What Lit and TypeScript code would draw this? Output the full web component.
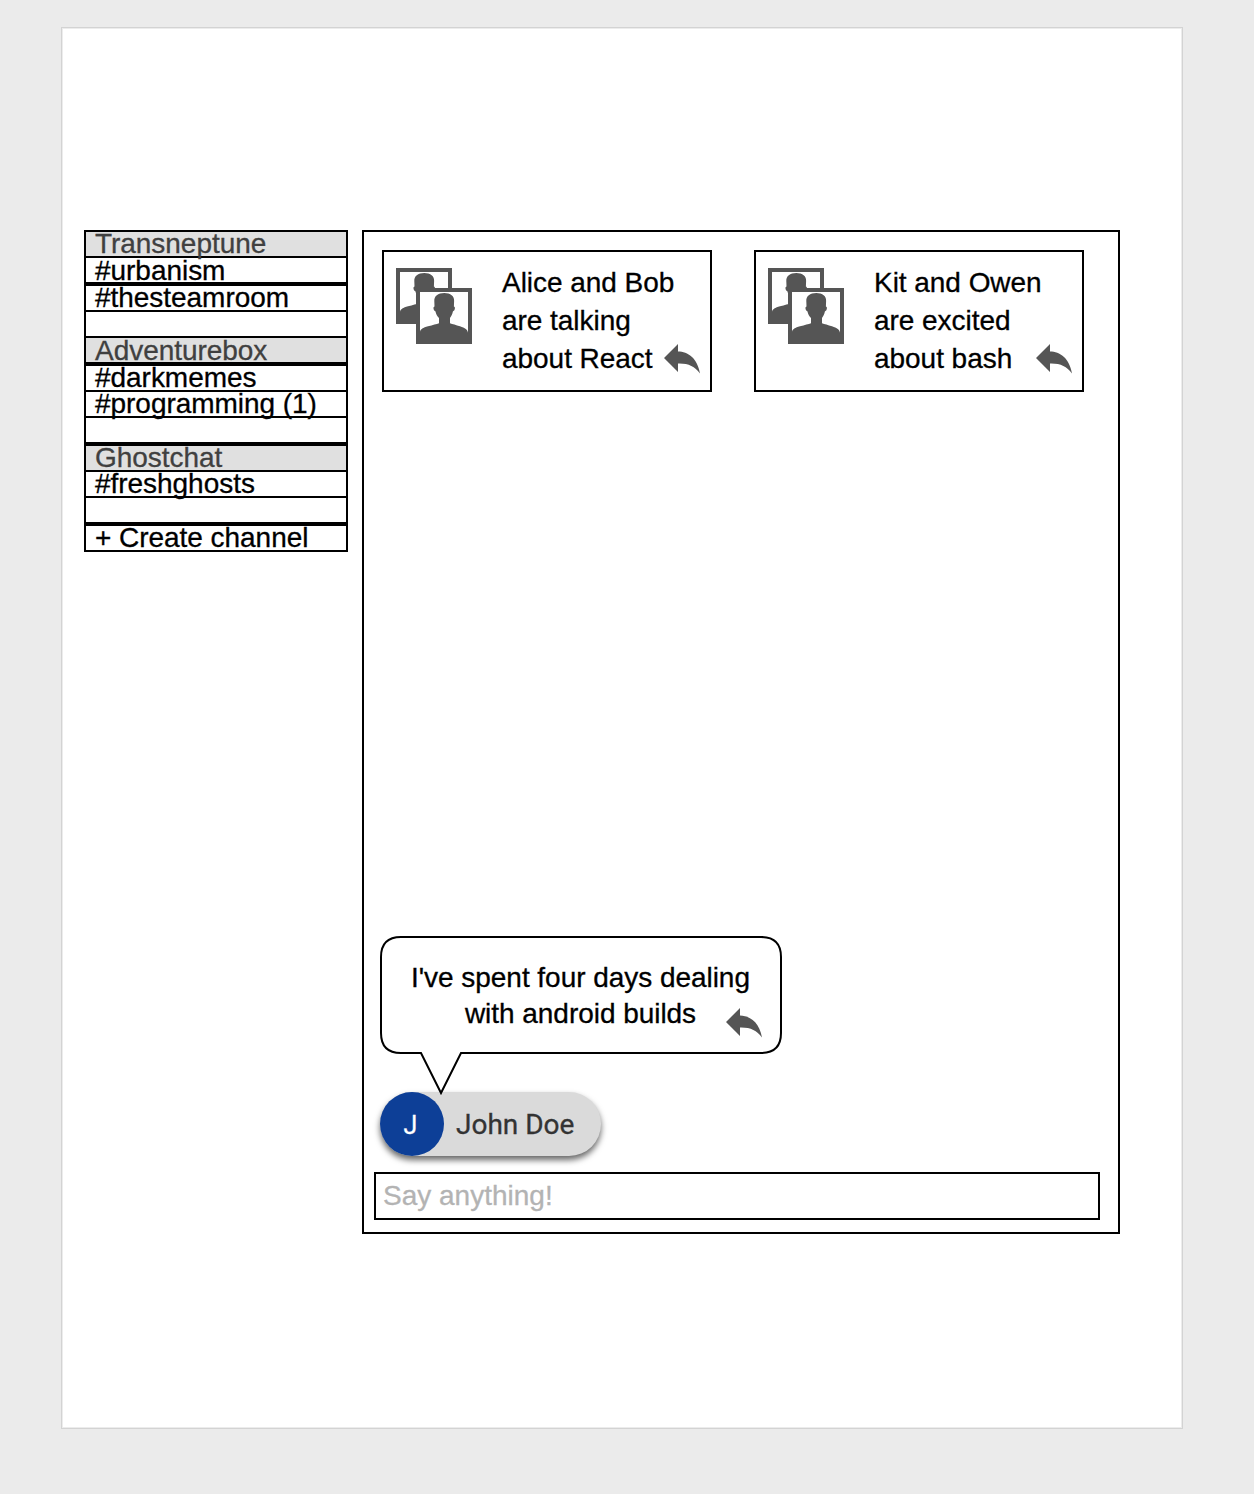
import { LitElement, html, css, svg } from "lit";
import { customElement, property } from "lit/decorators.js";
import { classMap } from "lit/directives/class-map.js";

const portrait = svg`
  <rect width="56" height="56" fill="#555"/>
  <path fill="#fff" d="M4 4H52V44.800C51.700 41.800 49 40 44 38.300C40 37 36.500 36 34 35.200V30C35 28.500 36.400 26.500 36.900 23.500C37.200 23 37.600 23.200 38.200 22.600C39.100 21 39.400 18.600 37.900 18.500L38.100 13C38.500 8 34.500 4.900 28.300 4.900C22 4.900 18 8 18.300 13L18.500 18.500C17 18.600 17.300 21 18.200 22.600C18.800 23.200 19.200 23 19.500 23.500C20 26.500 21.400 28.500 23 30V35.200C20.500 36 17 37 12 38.300C7 39.700 4.500 41.300 4 43.800Z"/>`;

@customElement("people-icon")
export class PeopleIcon extends LitElement {
  static styles = css`
    :host { display: block; width: 76px; height: 76px; }
    svg { display: block; }
  `;
  render() {
    return html`<svg width="76" height="76" viewBox="0 0 76 76">
      <g>${portrait}</g>
      <g transform="translate(20 20)">${portrait}</g>
    </svg>`;
  }
}

@customElement("reply-icon")
export class ReplyIcon extends LitElement {
  static styles = css`
    :host { display: block; width: 36px; height: 30px; }
    svg { display: block; }
  `;
  render() {
    return html`<svg width="36" height="30" viewBox="0 0 36 30">
      <path fill="#555" d="M0 14L14 0V7.600C24 7.800 33.300 14 36 29.500C30.500 22.500 24.500 19.300 14 19.600V28Z"/>
    </svg>`;
  }
}

@customElement("topic-card")
export class TopicCard extends LitElement {
  @property({ attribute: false }) lines: string[] = [];
  static styles = css`
    :host {
      box-sizing: border-box;
      display: flex;
      align-items: flex-start;
      width: 330px;
      height: 142px;
      padding: 16px 10px 0 12px;
      border: 2px solid #000;
      background: #fff;
    }
    .text { flex: 1; margin: -4px 0 0 30px; white-space: nowrap; }
    .line { height: 38px; line-height: 38px; }
    .reply { align-self: flex-end; margin: 0 0 16px -60px; }
  `;
  render() {
    return html`
      <people-icon></people-icon>
      <div class="text">${this.lines.map((l) => html`<div class="line">${l}</div>`)}</div>
      <reply-icon class="reply"></reply-icon>
    `;
  }
}

interface Row {
  text: string;
  header?: boolean;
  apart?: boolean;
  low?: boolean;
}

@customElement("channel-list")
export class ChannelList extends LitElement {
  @property({ attribute: false }) rows: Row[] = [];
  static styles = css`
    :host { display: block; width: 264px; }
    .row {
      box-sizing: border-box;
      height: 28px;
      margin-top: -2px;
      padding-left: 9px;
      border: 2px solid #000;
      line-height: 23px;
      white-space: nowrap;
    }
    .row:first-child, .apart { margin-top: 0; }
    .header { background: #e0e0e0; color: #404040; }
    .low { line-height: 25px; }
  `;
  render() {
    return this.rows.map(
      (r) => html`<div class=${classMap({ row: true, header: !!r.header, apart: !!r.apart, low: !!r.low })}>${r.text}</div>`
    );
  }
}

@customElement("app-root")
export class AppRoot extends LitElement {
  private rows: Row[] = [
    { text: "Transneptune", header: true },
    { text: "#urbanism", low: true },
    { text: "#thesteamroom", apart: true },
    { text: "" },
    { text: "Adventurebox", header: true, low: true },
    { text: "#darkmemes", apart: true },
    { text: "#programming (1)" },
    { text: "" },
    { text: "Ghostchat", header: true, apart: true },
    { text: "#freshghosts" },
    { text: "" },
    { text: "+ Create channel", apart: true },
  ];

  private topics = [
    ["Alice and Bob", "are talking", "about React"],
    ["Kit and Owen", "are excited", "about bash"],
  ];

  static styles = css`
    :host {
      box-sizing: border-box;
      display: block;
      height: 1494px;
      padding: 27px 0 0 61px;
      background: #ebebeb;
      font: 28px "Liberation Sans", Arial, sans-serif;
      letter-spacing: -0.04px;
      -webkit-text-stroke: 0.3px currentColor;
      color: #000;
    }
    .page {
      box-sizing: border-box;
      display: flex;
      align-items: flex-start;
      gap: 14px;
      width: 1122px;
      height: 1402px;
      padding: 202px 0 0 22px;
      border: 1px solid #d3d3d3;
      box-shadow: inset 0 0 0 1px #ececec;
      background-color: #fff;
    }
    .room {
      box-sizing: border-box;
      display: flex;
      flex-direction: column;
      width: 758px;
      height: 1004px;
      padding: 18px 18px 12px 10px;
      border: 2px solid #000;
    }
    .topics { display: flex; gap: 42px; margin-left: 8px; }
    .message { margin: auto 0 16px 6px; }
    .bubble {
      position: relative;
      z-index: 1;
      width: 402px;
      height: 159px;
      margin-bottom: -3px;
    }
    .outline { position: absolute; left: 0; top: 0; }
    .words {
      position: relative;
      padding: 24px 1px 0 0;
      line-height: 36px;
      text-align: center;
      white-space: nowrap;
    }
    .reply { position: absolute; left: 346px; top: 72px; }
    .chip {
      display: flex;
      align-items: center;
      width: 221px;
      height: 64px;
      border-radius: 32px;
      background: #dadada;
      box-shadow: 0 4px 6px rgba(0, 0, 0, 0.6);
      font-family: Roboto, sans-serif;
      letter-spacing: 0;
      color: #333;
    }
    .avatar {
      box-sizing: border-box;
      width: 64px;
      height: 64px;
      margin-right: 12px;
      padding-right: 3px;
      border-radius: 50%;
      background: #0d3f97;
      color: #fff;
      font-size: 25px;
      line-height: 67px;
      text-align: center;
    }
    .input {
      box-sizing: border-box;
      height: 48px;
      padding-left: 7px;
      border: 2px solid #000;
      line-height: 43px;
      letter-spacing: 0;
      color: #b3b3b3;
    }
  `;

  render() {
    return html`
      <div class="page">
        <channel-list .rows=${this.rows}></channel-list>
        <div class="room">
          <div class="topics">
            ${this.topics.map((t) => html`<topic-card .lines=${t}></topic-card>`)}
          </div>
          <div class="message">
            <div class="bubble">
              <svg class="outline" width="402" height="162" viewBox="0 0 402 162">
                <path fill="#fff" stroke="#000" stroke-width="2" stroke-miterlimit="10"
                  d="M21 1H381Q401 1 401 21V97Q401 117 381 117H81L61 157L41 117H21Q1 117 1 97V21Q1 1 21 1Z"/>
              </svg>
              <div class="words">I've spent four days dealing<br />with android builds</div>
              <reply-icon class="reply"></reply-icon>
            </div>
            <div class="chip"><div class="avatar">J</div>John Doe</div>
          </div>
          <div class="input">Say anything!</div>
        </div>
      </div>
    `;
  }
}
